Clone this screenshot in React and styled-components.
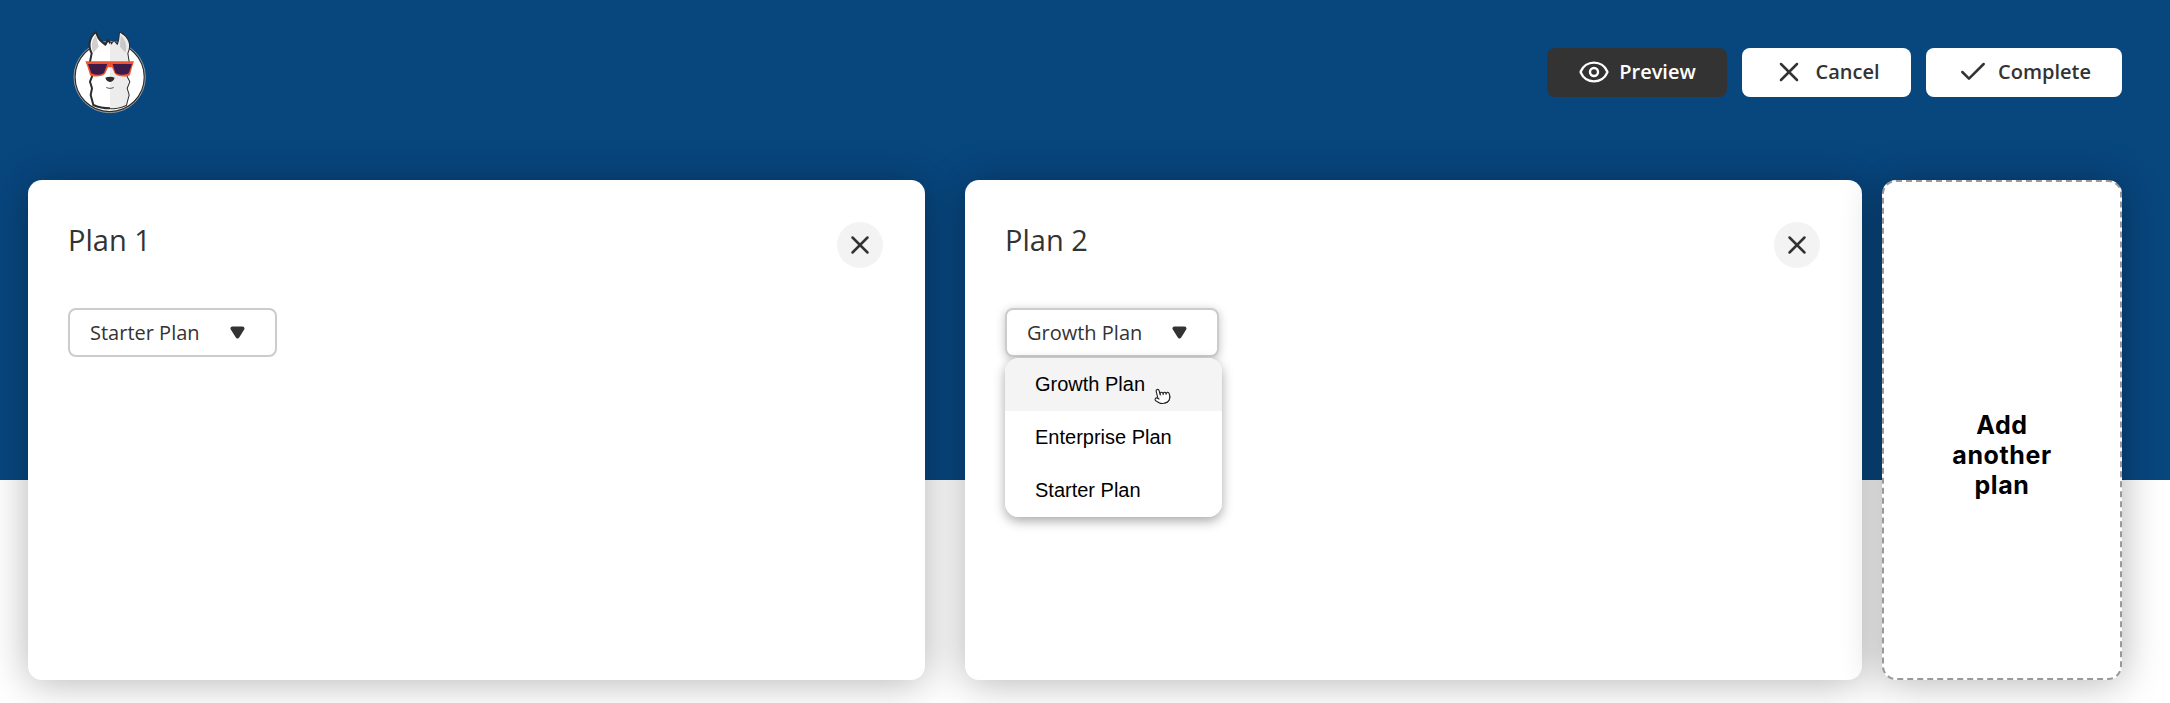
import styled, { createGlobalStyle } from "styled-components"
import { Eye, X, Check, Pointer } from "lucide-react"

const GlobalStyle = createGlobalStyle`
  html, body {
    margin: 0;
    padding: 0;
    background: #fff;
  }
  * {
    box-sizing: border-box;
  }
`

const Page = styled.div`
  width: 2170px;
  height: 703px;
  overflow: hidden;
  background: linear-gradient(#08467e 480px, #fff 480px);
  font-family: "Open Sans", "Noto Sans", sans-serif;
  color: #333;
`

const Header = styled.header`
  display: flex;
  justify-content: space-between;
  align-items: flex-start;
  height: 180px;
  padding: 48px 48px 0 40px;
`

const LogoWrap = styled.div`
  margin-top: -38px;
  width: 140px;
  height: 120px;
`

const ButtonGroup = styled.div`
  display: flex;
  gap: 15px;
`

const ActionButton = styled.button`
  display: flex;
  align-items: center;
  justify-content: center;
  gap: ${p => p.$gap || 10}px;
  width: ${p => p.$width}px;
  height: 49px;
  border: 0;
  border-radius: 8px;
  padding: 0 0 2px;
  background: ${p => (p.$dark ? "#333" : "#fff")};
  color: ${p => (p.$dark ? "#fff" : "#333")};
  font-family: inherit;
  font-size: 20px;
  font-weight: 600;
`

const Cards = styled.main`
  display: flex;
  padding: 0 48px 0 28px;
`

const Card = styled.section`
  position: relative;
  width: 897px;
  height: 500px;
  margin-right: ${p => p.$gap}px;
  padding: 42px 42px 0 40px;
  background: #fff;
  border-radius: 14px;
  box-shadow: 0 2px 40px rgba(0, 0, 0, 0.3);
`

const CardHead = styled.div`
  display: flex;
  justify-content: space-between;
  align-items: flex-start;
  margin-bottom: 40px;
`

const CardTitle = styled.h2`
  margin: 0;
  font-size: 29px;
  font-weight: 400;
  line-height: 36px;
`

const CloseButton = styled.button`
  display: flex;
  align-items: center;
  justify-content: center;
  width: 46px;
  height: 46px;
  padding: 0;
  border: 0;
  border-radius: 50%;
  background: #f3f3f3;
  color: #333;
`

const SelectWrap = styled.div`
  position: relative;
  display: inline-block;
`

const Select = styled.div`
  display: inline-flex;
  align-items: center;
  gap: 30px;
  height: 49px;
  padding: 0 30px 0 20px;
  border: 2px solid #ccc;
  border-radius: 8px;
  background: #fff;
  font-size: 20px;
  box-shadow: ${p => (p.$open ? "0 2px 10px rgba(0, 0, 0, 0.25)" : "none")};
`

const Menu = styled.ul`
  position: absolute;
  top: 50px;
  left: 0;
  width: 217px;
  margin: 0;
  padding: 0;
  list-style: none;
  background: #fff;
  border-radius: 14px;
  overflow: hidden;
  box-shadow: 0 4px 12px rgba(0, 0, 0, 0.35);
  font-family: "Liberation Sans", Arial, sans-serif;
  font-size: 20px;
  color: #000;
`

const MenuItem = styled.li`
  height: 53px;
  padding-left: 30px;
  line-height: 52px;
  background: ${p => (p.$active ? "#f4f4f4" : "#fff")};
`

const Cursor = styled.div`
  position: absolute;
  top: 79px;
  left: 148px;
  display: flex;
  transform: rotate(-14deg);
`

const AddCard = styled(Card)`
  display: flex;
  align-items: center;
  justify-content: center;
  width: 240px;
  padding: 50px 50px 0;
  border: 2px dashed #999;
  font-family: Inter, "Liberation Sans", sans-serif;
  font-size: 25px;
  font-weight: 700;
  line-height: 30px;
  letter-spacing: 0.6px;
  text-align: center;
  color: #000;
`

const Triangle = () => (
  <svg width="15" height="13" viewBox="0 0 15 13">
    <path d="M2.5 2.5 H12.5 L7.5 10.5 Z" fill="#333" stroke="#333" strokeWidth="4" strokeLinejoin="round" />
  </svg>
)

const Logo = () => (
  <svg width="140" height="120" viewBox="0 0 420 360">
    <circle cx="209" cy="201" r="104" fill="#fff" stroke="#2c2c2c" strokeWidth="4" />
    <circle cx="209" cy="201" r="107" fill="none" stroke="#9a9a9a" strokeWidth="3" />
    <path
      d="M168 66 C150 80 142 105 155 130 L150 155 L156 200 L150 215 L156 235 L152 255 L160 285 C190 298 230 298 258 285 L266 255 L260 235 L268 215 L260 200 L266 155 L262 130 C274 105 266 82 240 68 C238 85 238 95 232 106 L222 94 L214 104 L204 90 L196 104 L186 96 C178 90 172 80 168 66 Z"
      fill="#fff"
      stroke="#2c2c2c"
      strokeWidth="6"
      strokeLinejoin="round"
    />
    <path d="M210 96 L214 104 L222 94 L232 106 C238 95 238 85 240 68 C266 82 274 105 262 130 L266 155 L260 200 L268 215 L260 235 L266 255 L258 285 C240 293 225 295 210 295 Z" fill="#ececec" />
    <path d="M168 74 C154 90 152 108 160 128 L176 110 Z" fill="#d0d0d0" />
    <path d="M242 76 C258 92 262 108 256 128 L240 110 Z" fill="#c8c8c8" />
    <path d="M136 154 H282 L276 172 L270 195 C262 202 232 202 224 190 L216 172 H204 L196 190 C188 202 158 202 150 195 L143 172 Z" fill="#f0532d" />
    <path d="M144 162 H202 L192 188 C184 196 162 196 154 190 Z" fill="#3e1a4a" />
    <path d="M218 162 H276 L266 190 C258 196 236 196 226 188 Z" fill="#3e1a4a" />
    <path d="M196 203 C204 199 216 199 224 203 C222 212 214 216 210 216 C206 216 198 212 196 203 Z" fill="#2c2c2c" />
    <path d="M200 233 C206 236 214 236 220 233" fill="none" stroke="#555" strokeWidth="3" strokeLinecap="round" />
  </svg>
)

const PlanCard = ({ title, value, gap, open }) => (
  <Card $gap={gap}>
    <CardHead>
      <CardTitle>{title}</CardTitle>
      <CloseButton><X size={30} strokeWidth={2} /></CloseButton>
    </CardHead>
    <SelectWrap>
      <Select $open={open}>
        {value}
        <Triangle />
      </Select>
      {open && (
        <Menu>
          <MenuItem $active>Growth Plan</MenuItem>
          <MenuItem>Enterprise Plan</MenuItem>
          <MenuItem>Starter Plan</MenuItem>
        </Menu>
      )}
      {open && (
        <Cursor><Pointer size={18} fill="#fff" color="#222" strokeWidth={1.5} /></Cursor>
      )}
    </SelectWrap>
  </Card>
)

const App = () => (
  <Page>
    <GlobalStyle />
    <Header>
      <LogoWrap><Logo /></LogoWrap>
      <ButtonGroup>
        <ActionButton $dark $width={180} $gap={9}><Eye size={32} strokeWidth={1.8} />Preview</ActionButton>
        <ActionButton $width={169} $gap={10}><X size={32} strokeWidth={1.9} />Cancel</ActionButton>
        <ActionButton $width={196} $gap={9}><Check size={32} strokeWidth={1.9} />Complete</ActionButton>
      </ButtonGroup>
    </Header>
    <Cards>
      <PlanCard title="Plan 1" value="Starter Plan" gap={40} />
      <PlanCard title="Plan 2" value="Growth Plan" gap={20} open />
      <AddCard>Add another plan</AddCard>
    </Cards>
  </Page>
)

export default App
